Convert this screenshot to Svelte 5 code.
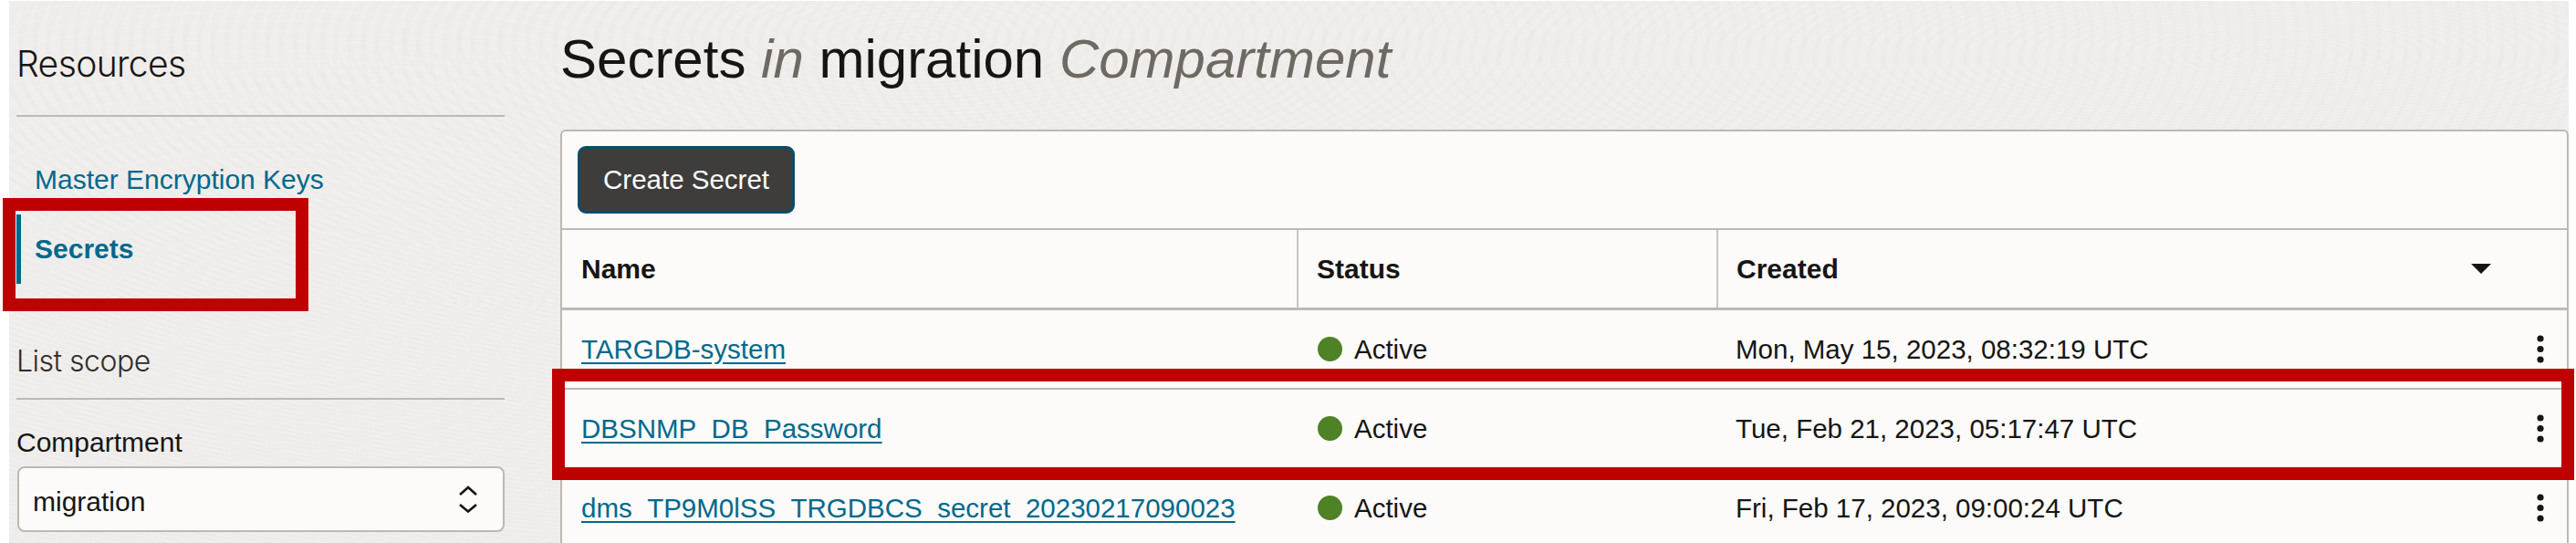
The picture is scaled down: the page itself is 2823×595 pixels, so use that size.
<script>
  const secrets = [
    { name: "TARGDB-system", created: "Mon, May 15, 2023, 08:32:19 UTC" },
    { name: "DBSNMP_DB_Password", created: "Tue, Feb 21, 2023, 05:17:47 UTC" },
    { name: "dms_TP9M0lSS_TRGDBCS_secret_20230217090023", created: "Fri, Feb 17, 2023, 09:00:24 UTC" }
  ];
</script>

<div class="page">
  <aside class="sidebar">
    <h2 class="resources">Resources</h2>
    <nav class="menu">
      <a class="item" href="#keys">Master Encryption Keys</a>
      <a class="item active" href="#secrets">Secrets</a>
    </nav>
    <h3 class="scope">List scope</h3>
    <label class="label" for="compartment">Compartment</label>
    <div class="select" id="compartment">
      <span>migration</span>
      <svg width="22" height="30" viewBox="0 0 22 30" fill="none" stroke="#161513" stroke-width="2.6">
        <path d="M2 10 L11 2 L20 10" />
        <path d="M2 21 L11 28.500 L20 21" />
      </svg>
    </div>
  </aside>

  <main class="content">
    <h1 class="title">Secrets <em>in</em> migration <em>Compartment</em></h1>
    <section class="card">
      <div class="toolbar">
        <button class="create">Create Secret</button>
      </div>
      <table>
        <colgroup>
          <col class="c-name" />
          <col class="c-status" />
          <col />
        </colgroup>
        <thead>
          <tr>
            <th>Name</th>
            <th>Status</th>
            <th>
              <div class="sort">
                Created
                <svg width="22" height="11" viewBox="0 0 22 11"><path d="M0 0 H22 L11 11 Z" fill="#161513" /></svg>
              </div>
            </th>
          </tr>
        </thead>
        <tbody>
          {#each secrets as s}
            <tr>
              <td><a class="link" href="#secret">{s.name}</a></td>
              <td><span class="status"><i class="dot"></i>Active</span></td>
              <td>
                <div class="when">
                  {s.created}
                  <svg width="8" height="31" viewBox="0 0 8 31" fill="#161513">
                    <circle cx="4" cy="4" r="3.600" />
                    <circle cx="4" cy="15.500" r="3.600" />
                    <circle cx="4" cy="27" r="3.600" />
                  </svg>
                </div>
              </td>
            </tr>
          {/each}
        </tbody>
      </table>
    </section>
  </main>

  <div class="mark mark-menu"></div>
  <div class="mark mark-row"></div>
</div>

<style>
  :global(body) {
    margin: 0;
    background: #fff;
  }

  .page {
    position: relative;
    box-sizing: border-box;
    display: flex;
    width: 2823px;
    height: 595px;
    overflow: hidden;
    padding: 1px 8px 0 10px;
    font-family: "Liberation Sans", Arial, sans-serif;
    color: #161513;
    background-clip: content-box;
    background-color: #f1efed;
    background-image:
      repeating-radial-gradient(ellipse at 300px 330px, rgba(120, 110, 100, 0.016) 0 5px, transparent 5px 14px),
      repeating-radial-gradient(ellipse at 1000px 40px, rgba(120, 110, 100, 0.014) 0 5px, transparent 5px 15px),
      repeating-radial-gradient(ellipse at 2500px 60px, rgba(120, 110, 100, 0.014) 0 5px, transparent 5px 15px);
  }

  .sidebar {
    width: 535px;
    flex: none;
    margin: 0 0 0 8px;
  }

  .resources {
    margin: 45px 0 0;
    padding-bottom: 32px;
    border-bottom: 2px solid #bdb8b2;
    font-family: Inter, "Liberation Sans", sans-serif;
    font-size: 39px;
    font-weight: 300;
    line-height: 48px;
    letter-spacing: -0.6px;
  }

  .menu {
    display: flex;
    flex-direction: column;
    margin-top: 31px;
  }

  .item {
    display: flex;
    align-items: center;
    height: 76px;
    padding-left: 20px;
    font-size: 30px;
    color: #00688c;
    text-decoration: none;
  }

  .active {
    padding-left: 15px;
    border-left: 5px solid #00688c;
    font-weight: 700;
  }

  .scope {
    margin: 65px 0 0;
    padding-bottom: 20px;
    border-bottom: 2px solid #bdb8b2;
    font-family: Inter, "Liberation Sans", sans-serif;
    font-size: 32px;
    font-weight: 300;
    line-height: 40px;
    letter-spacing: -0.5px;
    color: #2f2d2b;
  }

  .label {
    display: block;
    margin: 27px 0 6px;
    font-size: 30px;
    line-height: 40px;
  }

  .select {
    box-sizing: border-box;
    display: flex;
    align-items: center;
    justify-content: space-between;
    height: 72px;
    margin-left: 1px;
    padding: 0 27px 0 15px;
    background: #fcfbfa;
    border: 2px solid #bdb8b2;
    border-radius: 8px;
    font-size: 30px;
  }

  .select span {
    padding-top: 5px;
  }

  .content {
    flex: 1;
    margin-left: 61px;
    min-width: 0;
  }

  .title {
    margin: 28px 0 0;
    font-size: 60px;
    font-weight: 400;
    line-height: 72px;
  }

  .title em {
    color: #6f6964;
  }

  .card {
    margin-top: 41px;
    background: #fcfbfa;
    border: 2px solid #bdb8b2;
    border-bottom: 0;
    border-radius: 6px 6px 0 0;
  }

  .toolbar {
    padding: 16px 17px;
    border-bottom: 2px solid #bdb8b2;
  }

  .create {
    display: block;
    width: 238px;
    height: 74px;
    padding: 0;
    background: #3f3d3b;
    border: 3px solid #0c4c68;
    border-radius: 9px;
    color: #fff;
    font-family: inherit;
    font-size: 29.5px;
  }

  table {
    width: 100%;
    table-layout: fixed;
    border-collapse: collapse;
  }

  .c-name {
    width: 806px;
  }

  .c-status {
    width: 460px;
  }

  th {
    height: 85px;
    padding: 0 20px;
    border-bottom: 3px solid #bdb8b2;
    border-left: 2px solid #c9c5c0;
    font-size: 30px;
    font-weight: 700;
    text-align: left;
  }

  th:first-child {
    padding-left: 21px;
    border-left: 0;
  }

  td {
    height: 85px;
    padding: 0 20px;
    border-bottom: 2px solid #bdb8b2;
    font-size: 29.5px;
  }

  td:first-child {
    padding-left: 21px;
  }

  td:nth-child(2) {
    padding-left: 22px;
  }

  .sort,
  .when {
    display: flex;
    align-items: center;
    justify-content: space-between;
  }

  .sort svg {
    margin: 0 63px 0 0;
  }

  .when svg {
    margin-right: 5px;
  }

  .link {
    color: #00688c;
    text-underline-offset: 4px;
  }

  .status {
    display: flex;
    align-items: center;
    gap: 13px;
  }

  .dot {
    width: 27px;
    height: 27px;
    border-radius: 50%;
    background: #4f8125;
  }

  /* red annotation boxes drawn over the screenshot */
  .mark {
    position: absolute;
    box-sizing: border-box;
    border: 14px solid #bf0000;
    pointer-events: none;
  }

  .mark-menu {
    left: 3px;
    top: 217px;
    width: 335px;
    height: 124px;
  }

  .mark-row {
    left: 605px;
    top: 404px;
    width: 2216px;
    height: 122px;
  }
</style>
